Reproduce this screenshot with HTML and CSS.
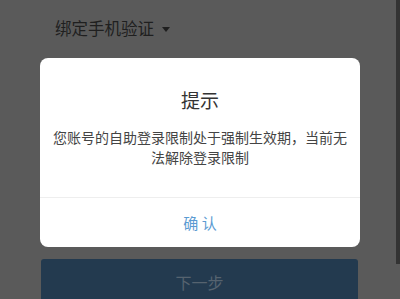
FILE: index.html
```html
<!DOCTYPE html>
<html lang="zh">
<head>
<meta charset="utf-8">
<link rel="stylesheet" href="styles.css">
</head>
<body>
<div class="page">
  <div class="header">
    <span class="header-title">绑定手机验证</span>
    <span class="caret"></span>
  </div>
  <div class="next-btn">下一步</div>
</div>
<div class="scrollbar"></div>
<div class="dialog">
  <div class="dialog-title">提示</div>
  <div class="dialog-body">您账号的自助登录限制处于强制生效期，当前无法解除登录限制</div>
  <div class="dialog-footer">确 认</div>
</div>
</body>
</html>
```
FILE: styles.css
```css
html, body {
  margin: 0;
  padding: 0;
  width: 400px;
  height: 299px;
  overflow: hidden;
  background: #5a5a5a;
  font-family: "Noto Sans CJK SC", "Noto Sans", sans-serif;
}
.page {
  padding: 0 42px 0 41px;
}
.header {
  display: flex;
  align-items: center;
  height: 22px;
  margin-top: 17px;
  padding-left: 14px;
  gap: 8px;
}
.header-title {
  font-size: 16.5px;
  line-height: 22px;
  color: #1f1f1f;
}
.caret {
  width: 0;
  height: 0;
  border-left: 4px solid transparent;
  border-right: 4px solid transparent;
  border-top: 5px solid #1f1f1f;
  margin-top: 2px;
}
.next-btn {
  margin-top: 220px;
  height: 44px;
  background: #233a4f;
  border-radius: 3px 3px 0 0;
  color: #56636f;
  font-size: 16px;
  line-height: 46px;
  text-align: center;
}
.scrollbar {
  position: absolute;
  left: 396px;
  top: 0;
  width: 4px;
  height: 264px;
  background: #333333;
}
.dialog {
  position: absolute;
  left: 40px;
  top: 58px;
  width: 320px;
  height: 189px;
  background: #ffffff;
  border-radius: 8px;
  display: flex;
  flex-direction: column;
}
.dialog-title {
  padding-top: 29px;
  font-size: 19px;
  line-height: 26px;
  color: #333333;
  text-align: center;
}
.dialog-body {
  margin-top: 14px;
  padding: 0 13px;
  font-size: 14px;
  line-height: 20px;
  color: #444444;
  text-align: center;
}
.dialog-footer {
  margin-top: auto;
  height: 49px;
  border-top: 1px solid #eeeeee;
  font-size: 15px;
  line-height: 50px;
  color: #5b9bd2;
  text-align: center;
}
```
